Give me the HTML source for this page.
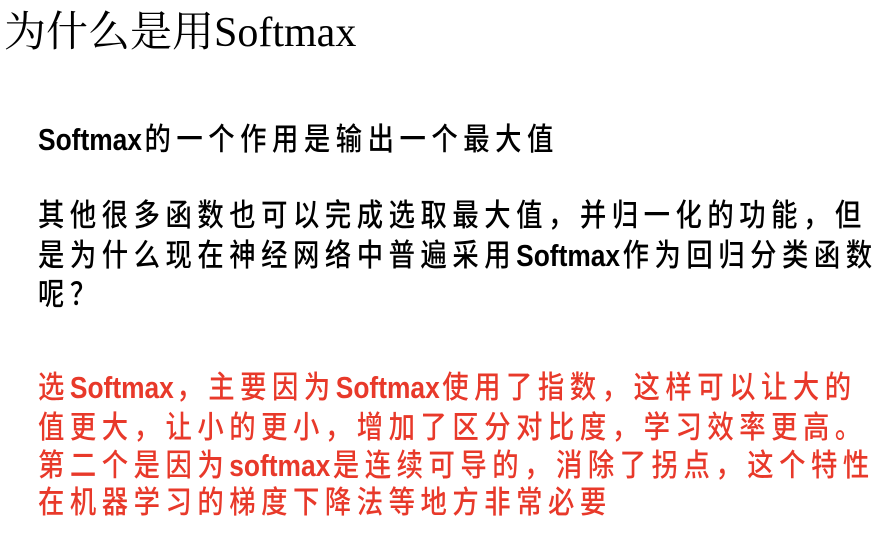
<!DOCTYPE html>
<html><head><meta charset="utf-8"><style>
html,body{margin:0;padding:0;background:#fff;width:891px;height:551px;overflow:hidden}
.t{position:absolute;left:4px;top:8px;font-family:"Liberation Serif","Noto Serif CJK SC",serif;font-size:42px;line-height:50px;white-space:nowrap;color:#000}
.l{position:absolute;left:38px;font-family:"Liberation Sans","Noto Sans CJK SC",sans-serif;font-size:31px;line-height:38px;white-space:nowrap;letter-spacing:6.5px;color:#000;transform:scaleX(0.85);transform-origin:0 50%;font-weight:500}
.l span{letter-spacing:0;margin-right:3px;font-weight:bold}
.r{color:#e8392a}
</style></head><body>
<div class="t">为什么是用Softmax</div>
<div class="l" style="top:121px"><span>Softmax</span>的一个作用是输出一个最大值</div>
<div class="l" style="top:197px">其他很多函数也可以完成选取最大值，并归一化的功能，但</div>
<div class="l" style="top:237px">是为什么现在神经网络中普遍采用<span>Softmax</span>作为回归分类函数</div>
<div class="l" style="top:276px">呢？</div>
<div class="l r" style="top:369px">选<span>Softmax</span>，主要因为<span>Softmax</span>使用了指数，这样可以让大的</div>
<div class="l r" style="top:409px">值更大，让小的更小，增加了区分对比度，学习效率更高。</div>
<div class="l r" style="top:447px">第二个是因为<span>softmax</span>是连续可导的，消除了拐点，这个特性</div>
<div class="l r" style="top:484px">在机器学习的梯度下降法等地方非常必要</div>
</body></html>
